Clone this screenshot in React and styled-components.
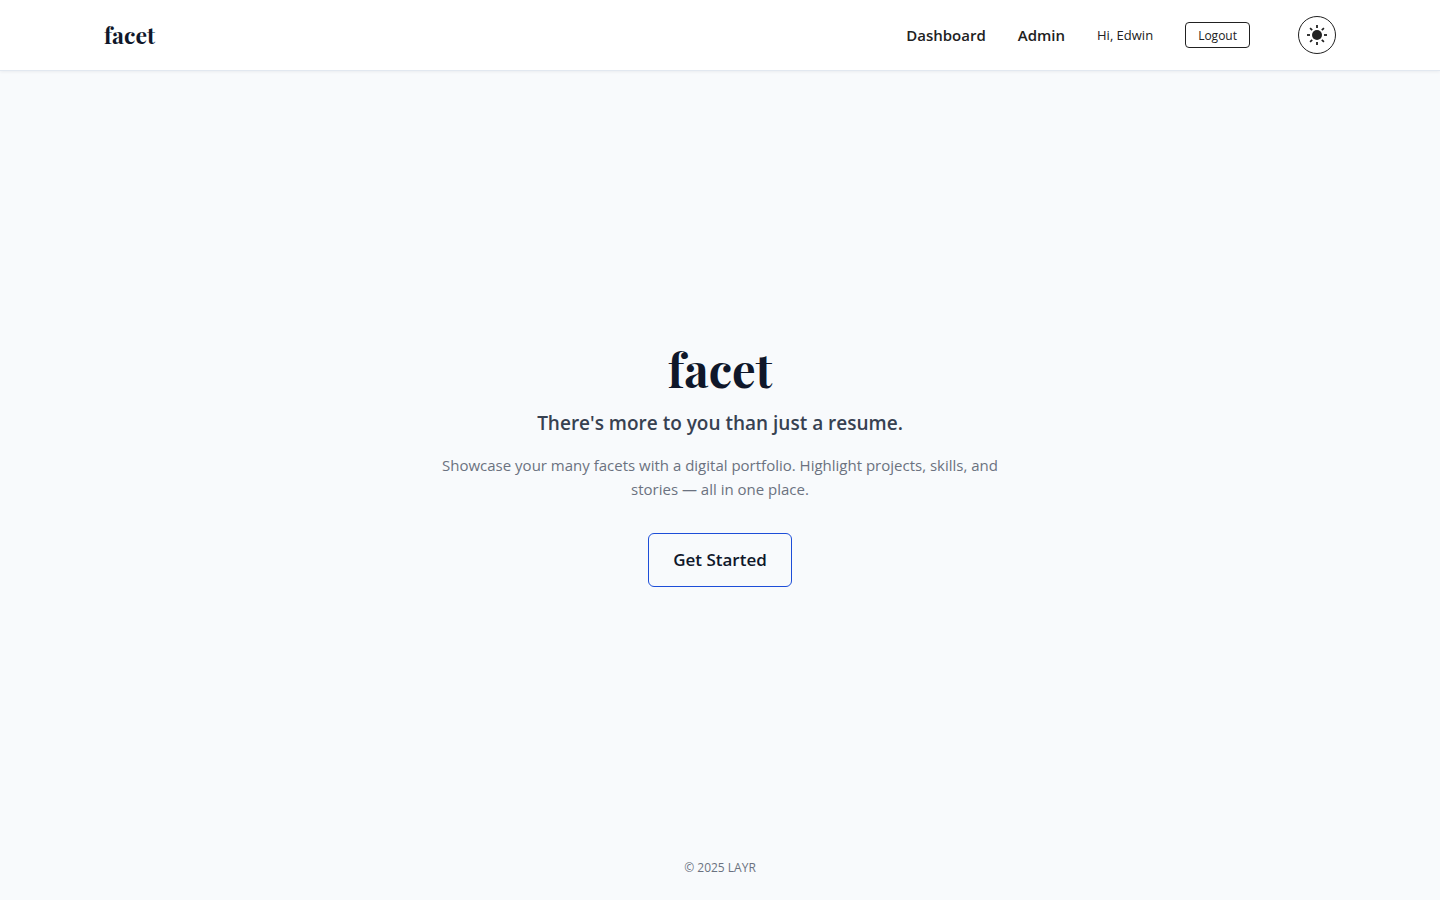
import React from "react";
import styled, { createGlobalStyle, css } from "styled-components";

const GlobalStyle = createGlobalStyle`
  *, *::before, *::after { box-sizing: border-box; }
  body {
    margin: 0;
    background: #f8fafc;
    color: #212121;
    font-family: "Segoe UI", "Open Sans", "Noto Sans", sans-serif;
    font-size: 15px;
    line-height: 24px;
  }
`;

const displayFace = css`
  font-family: "Playfair Display", "Liberation Serif", serif;
  font-weight: 700;
  color: #0f172a;
`;

const Page = styled.div`
  min-height: 100vh;
  display: flex;
  flex-direction: column;
`;

const Header = styled.header`
  background: #ffffff;
  border-bottom: 1px solid #e2e8f0;
  box-shadow: 0 1px 3px rgba(15, 23, 42, 0.06);
`;

const HeaderInner = styled.div`
  max-width: 1280px;
  margin: 0 auto;
  padding: 16px 24px;
  display: flex;
  align-items: center;
  justify-content: space-between;
`;

const Brand = styled.a`
  ${displayFace}
  font-size: 23px;
  line-height: 32px;
  text-decoration: none;
`;

const HeaderEnd = styled.div`
  display: flex;
  align-items: center;
  gap: 48px;
`;

const Nav = styled.nav`
  display: flex;
  align-items: center;
  gap: 32px;
`;

const NavLink = styled.a`
  color: #212121;
  font-weight: 600;
  text-decoration: none;
`;

const Greeting = styled.span`
  font-size: 13px;
`;

const OutlineButton = styled.button`
  font-family: inherit;
  background: transparent;
  cursor: pointer;
`;

const LogoutButton = styled(OutlineButton)`
  padding: 1px 12px 0;
  border: 1px solid #212121;
  border-radius: 4px;
  color: #212121;
  font-size: 12px;
  line-height: 23px;
`;

const ThemeToggle = styled(OutlineButton)`
  width: 38px;
  height: 38px;
  padding: 0;
  border: 1px solid #212121;
  border-radius: 50%;
  color: #212121;
  display: flex;
  align-items: center;
  justify-content: center;
`;

const Main = styled.main`
  flex: 1;
  display: flex;
  flex-direction: column;
  align-items: center;
  justify-content: center;
  padding: 24px 24px 0;
  text-align: center;
`;

const Title = styled.h1`
  ${displayFace}
  margin: 0 0 16px;
  font-size: 47px;
  line-height: 48px;
`;

const Tagline = styled.p`
  margin: 0 0 16px;
  color: #374151;
  font-size: 19px;
  font-weight: 600;
  line-height: 28px;
`;

const Description = styled.p`
  max-width: 576px;
  margin: 0 0 32px;
  color: #6b7280;
`;

const StartButton = styled(OutlineButton)`
  padding: 12px 24px;
  border: 1px solid #1d4ed8;
  border-radius: 6px;
  color: #0f172a;
  font-size: 17px;
  font-weight: 600;
  line-height: 28px;
`;

const Footer = styled.footer`
  padding: 24px;
  color: #6b7280;
  font-size: 12px;
  line-height: 16px;
  text-align: center;
`;

const rays = [0, 45, 90, 135, 180, 225, 270, 315];

function SunIcon() {
  return (
    <svg width="24" height="24" viewBox="0 0 24 24" aria-hidden="true">
      <circle cx="12" cy="12" r="5" fill="currentColor" />
      {rays.map((angle) => (
        <path
          key={angle}
          d={angle % 90 ? "M12 2.2v3" : "M12 2v3"}
          stroke="currentColor"
          strokeWidth={angle % 90 ? 1.7 : 1.8}
          transform={`rotate(${angle} 12 12)`}
        />
      ))}
    </svg>
  );
}

export default function App() {
  return (
    <>
      <GlobalStyle />
      <Page>
        <Header>
          <HeaderInner>
            <Brand href="#home">facet</Brand>
            <HeaderEnd>
              <Nav>
                <NavLink href="#dashboard">Dashboard</NavLink>
                <NavLink href="#admin">Admin</NavLink>
                <Greeting>Hi, Edwin</Greeting>
                <LogoutButton type="button">Logout</LogoutButton>
              </Nav>
              <ThemeToggle type="button" aria-label="Toggle theme">
                <SunIcon />
              </ThemeToggle>
            </HeaderEnd>
          </HeaderInner>
        </Header>
        <Main>
          <Title>facet</Title>
          <Tagline>There's more to you than just a resume.</Tagline>
          <Description>
            Showcase your many facets with a digital portfolio. Highlight
            projects, skills, and stories — all in one place.
          </Description>
          <StartButton type="button">Get Started</StartButton>
        </Main>
        <Footer>© 2025 LAYR</Footer>
      </Page>
    </>
  );
}
